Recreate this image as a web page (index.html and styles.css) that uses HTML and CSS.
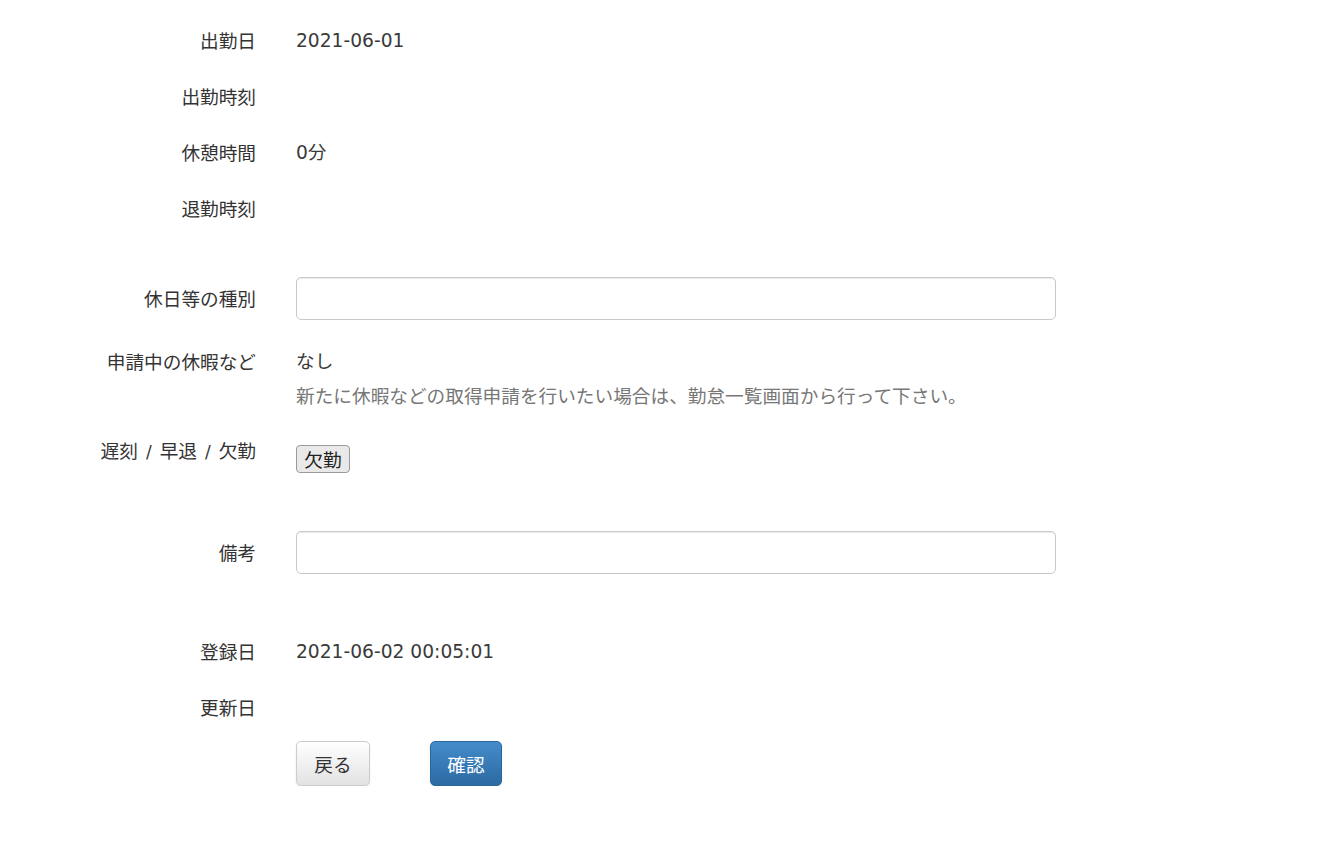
FILE: index.html
```html
<!DOCTYPE html>
<html lang="ja">
<head>
<meta charset="utf-8">
<title>勤怠</title>
<link rel="stylesheet" href="styles.css">
</head>
<body>
<form class="form">
  <div class="group g-first">
    <div class="label">出勤日</div>
    <div class="controls"><span class="value">2021-06-01</span></div>
  </div>
  <div class="group g-text">
    <div class="label">出勤時刻</div>
    <div class="controls"></div>
  </div>
  <div class="group g-text">
    <div class="label">休憩時間</div>
    <div class="controls"><span class="value">0分</span></div>
  </div>
  <div class="group g-text">
    <div class="label">退勤時刻</div>
    <div class="controls"></div>
  </div>

  <div class="group g-input g-holiday">
    <div class="label">休日等の種別</div>
    <div class="controls"><input class="text-input" type="text"></div>
  </div>

  <div class="group g-pending">
    <div class="label">申請中の休暇など</div>
    <div class="controls">
      <div class="value">なし</div>
      <div class="help">新たに休暇などの取得申請を行いたい場合は、勤怠一覧画面から行って下さい。</div>
    </div>
  </div>

  <div class="group g-absence">
    <div class="label">遅刻<span class="sep">/</span>早退<span class="sep">/</span>欠勤</div>
    <div class="controls"><button type="button" class="native-btn">欠勤</button></div>
  </div>

  <div class="group g-input g-note">
    <div class="label">備考</div>
    <div class="controls"><input class="text-input" type="text"></div>
  </div>

  <div class="group g-created">
    <div class="label">登録日</div>
    <div class="controls"><span class="value">2021-06-02 00:05:01</span></div>
  </div>
  <div class="group g-text">
    <div class="label">更新日</div>
    <div class="controls"></div>
  </div>

  <div class="actions">
    <button type="button" class="btn btn-default">戻る</button>
    <button type="button" class="btn btn-primary">確認</button>
  </div>
</form>
</body>
</html>
```

FILE: styles.css
```css
html, body {
  margin: 0;
  padding: 0;
  background: #ffffff;
}

body {
  font-family: "DejaVu Sans", "Noto Sans CJK JP", sans-serif;
  font-size: 18.67px;
  line-height: 28px;
  color: #333333;
}

.form {
  padding-top: 27px;
}

.group {
  display: flex;
  align-items: flex-start;
}

.label {
  width: 256px;
  flex: none;
  text-align: right;
  font-family: "Noto Sans CJK JP", sans-serif;
  min-height: 28px;
  line-height: 26px;
}

.sep {
  display: inline-block;
  margin: 0 8px;
  font-family: "DejaVu Sans", sans-serif;
  font-size: 17px;
}

.controls {
  margin-left: 40px;
  flex: none;
}

.value {
  color: #3a3a3a;
}

.g-text {
  margin-top: 28px;
}

.g-holiday {
  margin-top: 54px;
}

.g-input {
  align-items: center;
}

.text-input {
  box-sizing: border-box;
  display: block;
  width: 760px;
  height: 43px;
  margin: 0;
  border: 1px solid #c8c8c8;
  border-radius: 5px;
  box-shadow: inset 0 1px 1px rgba(0, 0, 0, 0.08);
  background: #ffffff;
  font: inherit;
  padding: 6px 12px;
}

.g-pending {
  margin-top: 28px;
}

.help {
  margin-top: 5px;
  color: #777777;
  font-family: "Noto Sans CJK JP", sans-serif;
}

.g-absence {
  margin-top: 28px;
}

.native-btn {
  box-sizing: border-box;
  display: block;
  margin-top: 8px;
  width: 54px;
  height: 28px;
  padding: 0;
  border: 1px solid #9a9a9a;
  border-radius: 4px;
  background: #e9e9e9;
  color: #222222;
  font-family: "Noto Sans CJK JP", sans-serif;
  font-size: 18.67px;
  line-height: 26px;
}

.g-note {
  margin-top: 58px;
}

.g-created {
  margin-top: 64px;
}

.actions {
  display: flex;
  gap: 60px;
  margin-top: 19px;
  margin-left: 296px;
}

.btn {
  box-sizing: border-box;
  height: 45px;
  padding: 0;
  border-radius: 5px;
  font-family: "Noto Sans CJK JP", sans-serif;
  font-size: 18.67px;
  line-height: 43px;
  white-space: nowrap;
  text-align: center;
}

.btn-default {
  width: 74px;
  color: #333333;
  border: 1px solid #cccccc;
  background: linear-gradient(to bottom, #ffffff 0%, #e2e2e2 100%);
  box-shadow: 0 1px 2px rgba(0, 0, 0, 0.1);
}

.btn-primary {
  width: 72px;
  color: #ffffff;
  border: 1px solid #2b669a;
  background: linear-gradient(to bottom, #438ccb 0%, #2c6aa2 100%);
  box-shadow: 0 1px 2px rgba(0, 0, 0, 0.1);
}
```
